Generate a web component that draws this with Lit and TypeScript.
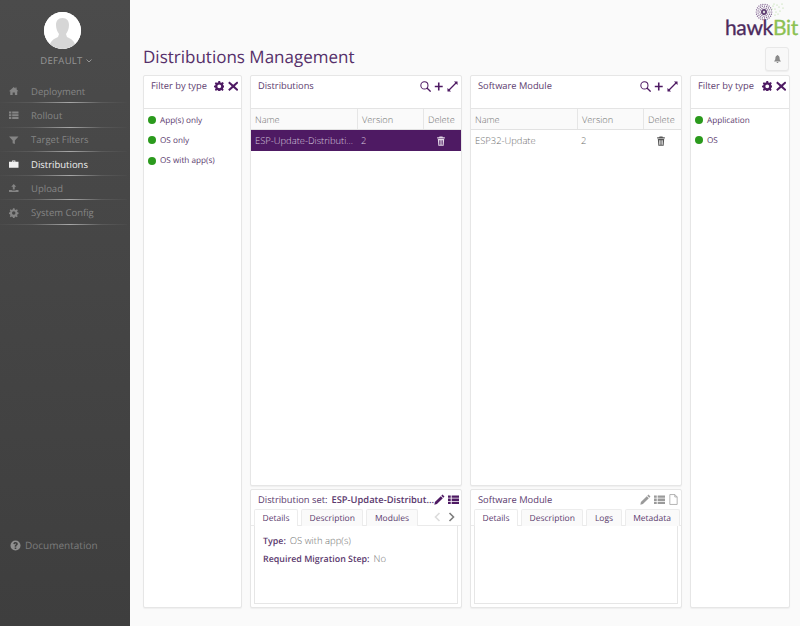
import { LitElement, html, css, svg } from "lit";
import { customElement } from "lit/decorators.js";

const I = {
  home: svg`<path d="M6 1 L8 2.8 V1.6 H9.6 V4.2 L12 6.4 H10.4 V11 H7.4 V7.8 H4.6 V11 H1.6 V6.4 H0 Z"/>`,
  list: svg`<path d="M0 1.5H3V4H0ZM4 1.5H12V4H4ZM0 5H3V7.5H0ZM4 5H12V7.5H4ZM0 8.5H3V11H0ZM4 8.5H12V11H4Z"/>`,
  filter: svg`<path d="M0 1.5H12L7.4 6.5V11L4.6 10V6.5Z"/>`,
  case: svg`<path d="M4 3V1.6H8V3H12V10.6H0V3ZM5 3H7V2.4H5Z"/>`,
  upload: svg`<path d="M6 1L9.2 4.4H7.2V8H4.8V4.4H2.8ZM0 8.4H3.6V9.2H8.4V8.4H12V11H0Z"/>`,
  gear: svg`<path fill-rule="evenodd" d="M5 0H7L7.3 1.6L8.6 2.1L10 1.2L11.2 2.6L10.2 3.9L10.7 5.1L12 5.4V7.2L10.7 7.5L10.2 8.7L11 10.1L9.7 11.3L8.5 10.4L7.3 10.9L7 12.2H5L4.7 10.9L3.5 10.4L2.2 11.3L1 10L1.8 8.7L1.3 7.5L0 7.2V5.4L1.3 5.1L1.8 3.9L0.9 2.6L2.1 1.3L3.4 2.1L4.7 1.6ZM6 3.9A2.2 2.2 0 1 0 6 8.3A2.2 2.2 0 1 0 6 3.9Z"/>`,
  close: svg`<path d="M1.6 0.6L6 4.4L10.4 0.6L11.8 2.2L7.8 6L11.8 9.8L10.4 11.4L6 7.6L1.6 11.4L0.2 9.8L4.2 6L0.2 2.2Z"/>`,
  plus: svg`<path d="M5 1H7V5H11V7H7V11H5V7H1V5H5Z"/>`,
  expand: svg`<path d="M11.5 .5V4.4L10 3L3 10L4.4 11.5H.5V7.6L2 9L9 2L7.6 .5Z"/>`,
  trash: svg`<path fill-rule="evenodd" d="M4.2 0.6H7.8L8.2 1.6H10.6V3H1.4V1.6H3.8ZM2.2 3.6H9.8L9.2 11.6H2.8ZM4 5V10.4H4.9V5ZM5.6 5V10.4H6.4V5ZM7.1 5V10.4H8V5Z"/>`,
  pencil: svg`<path d="M9.2 0.6L11.4 2.8L10.2 4L8 1.8ZM7.4 2.4L9.6 4.6L3.2 11L0.4 11.6L1 8.8Z"/>`,
  doc: svg`<path fill="none" stroke="currentColor" stroke-width=".8" d="M2 .6H7.4L10 3.2V11.4H2ZM7.4 .6V3.2H10"/>`,
  bell: svg`<path d="M6 0.6C6.6 .6 7 1 7 1.5C8.4 2 8.8 3.2 8.8 4.6C8.8 6.8 9.4 7.8 10.4 8.8V9.4H1.6V8.8C2.6 7.8 3.2 6.8 3.2 4.6C3.2 3.2 3.6 2 5 1.5C5 1 5.4 .6 6 .6ZM4.8 10H7.2C7.2 10.8 6.7 11.4 6 11.4C5.3 11.4 4.8 10.8 4.8 10Z"/>`,
  help: svg`<path fill-rule="evenodd" d="M6 .5A5.5 5.5 0 1 0 6 11.5A5.5 5.5 0 1 0 6 .5ZM5.1 8.2H6.9V9.8H5.1ZM3.6 4.4C3.7 3 4.7 2.3 6.1 2.3C7.5 2.3 8.5 3.1 8.5 4.3C8.5 5.2 8 5.6 7.4 6C7 6.3 6.9 6.5 6.9 7.4H5.1C5.1 6.2 5.3 5.7 6 5.2C6.5 4.9 6.7 4.7 6.7 4.4C6.7 4 6.4 3.8 6 3.8C5.6 3.8 5.3 4.1 5.3 4.6Z"/>`,
};
const icon = (p: unknown, cls = "") => html`<svg class="ico ${cls}" viewBox="0 0 12 12" fill="currentColor">${p}</svg>`;
const search = html`<svg class="ico" viewBox="0 0 12 12" fill="none" stroke="currentColor" stroke-width="1.1"><circle cx="4.8" cy="4.8" r="3.9"/><path d="M7.6 7.6L11.6 11.6" stroke-width="1.4"/></svg>`;

const dots = () => {
  const out = [];
  for (let r = 0; r < 3; r++) {
    const rad = 4.2 + r * 1.8;
    const n = 12 + r * 5;
    for (let i = 0; i < n; i++) {
      const a = (i / n) * Math.PI * 2;
      out.push(svg`<circle cx=${9 + Math.cos(a) * rad} cy=${9 + Math.sin(a) * rad} r="0.62" fill="#6d4a80" />`);
    }
  }
  for (const [x, y] of [[18, 3], [20, 6], [22, 2], [24, 4], [21, 9], [25, 8], [19, 1], [23, 11], [27, 1], [28, 5], [20, 12], [17, 6]]) {
    out.push(svg`<circle cx=${x} cy=${y} r="0.55" fill="#a9d18e" />`);
  }
  return out;
};

const nav = [
  ["Deployment", I.home], ["Rollout", I.list], ["Target Filters", I.filter],
  ["Distributions", I.case], ["Upload", I.upload], ["System Config", I.gear],
] as const;

@customElement("app-root")
export class AppRoot extends LitElement {
  static styles = css`
    :host { display: block; width: 800px; height: 626px; overflow: hidden; font-family: "Open Sans", sans-serif; font-size: 10px; color: #474747; text-rendering: geometricPrecision; }
    * { box-sizing: border-box; }
    .app { display: flex; height: 626px; background: #fafafa; }
    .ico { width: 12px; height: 12px; display: block; flex: none; }

    .side { width: 130px; flex: none; background: linear-gradient(#4b4b4b, #3e3e3e); display: flex; flex-direction: column; align-items: center; padding-top: 12px; }
    .avatar { width: 37px; height: 37px; border-radius: 50%; background: #fff; overflow: hidden; display: block; margin-right: 5px; }
    .user { margin: 5px 0 0 2px; color: #969696; font-size: 9.5px; letter-spacing: .3px; line-height: 14px; display: flex; align-items: center; gap: 3px; }
    .user svg { width: 6px; height: 4px; }
    .nav { width: 100%; margin-top: 11px; }
    .item { height: 24.3px; padding-left: 9px; display: flex; align-items: center; gap: 12.5px; color: #858585; font-size: 9.5px; position: relative; }
    .item .ico { width: 9.5px; height: 10px; }
    .item::after { content: ""; position: absolute; left: 0; right: 3px; bottom: 0; height: 1px; background: linear-gradient(90deg, #4a4a4a, #5a5a5a 25%, #a8a8a8 55%, #5a5a5a 80%, #4a4a4a); }
    .item.on { color: #f0f0f0; }
    .spacer { flex: 1; }
    .doc { width: 100%; padding: 0 0 74px 10px; display: flex; align-items: center; gap: 4px; color: #7c7c7c; font-size: 10px; }
    .doc .ico { width: 11px; height: 11px; color: #8f8f8f; }

    .main { flex: 1; min-width: 0; padding: 0 10px 18px 13px; display: flex; flex-direction: column; position: relative; }
    .head { height: 75px; flex: none; display: flex; justify-content: space-between; }
    h1 { margin: 44px 0 0; font-size: 17px; font-weight: 400; line-height: 26px; color: #552f69; }
    .head-r { display: flex; flex-direction: column; align-items: flex-end; margin-right: -10px; }
    .logo { height: 46px; width: 75px; position: relative; }
    .logo svg { position: absolute; left: 30px; top: 3px; width: 30px; height: 18px; }
    .logo span { position: absolute; right: 2px; top: 14px; font-size: 21px; line-height: 28px; font-family: "Lato", sans-serif; letter-spacing: -.3px; color: #4d2a5e; -webkit-text-stroke: .3px #4d2a5e; }
    .logo b { font-weight: 400; color: #8cc152; -webkit-text-stroke: .3px #8cc152; }
    .bell { width: 24px; height: 24px; margin-right: 11px; margin-top: 1px; border: 1px solid #e8e8e8; border-radius: 3px; background: #f8f8f8; display: flex; align-items: center; justify-content: center; color: #8a8a8a; box-shadow: 0 1px 1px #eee; }
    .bell .ico { width: 9px; height: 10px; }

    .cols { flex: 1; min-height: 0; display: grid; grid-template-columns: 99px 212px 212px 100px; column-gap: 8px; }
    .panel { background: #fff; border: 1px solid #e6e6e6; border-radius: 2px; box-shadow: 0 1px 1px #efefef; min-height: 0; min-width: 0; }
    .stack { display: flex; flex-direction: column; gap: 3px; min-height: 0; min-width: 0; }
    .stack .grow { flex: 1; }
    .stack .det { height: 119px; flex: none; padding: 1px 0 0; display: flex; flex-direction: column; }

    .phead { height: 33px; border-bottom: 1px solid #e4e4e4; padding: 3px 3px 0 7px; display: flex; align-items: flex-start; justify-content: space-between; color: #5b3a6e; font-size: 9.3px; line-height: 14px; }
    .tools { display: flex; gap: 3.5px; color: #4e1a63; align-items: center; height: 14px; }
    .tools .ico { width: 11px; height: 11px; }
    .tools .pl { width: 9.5px; height: 11px; }
    .filter .tools .ico { width: 10.5px; height: 10.5px; }
    .flist { padding-top: 1px; }
    .fitem { display: flex; align-items: center; gap: 4px; height: 20.3px; padding-left: 4px; color: #5b3a6e; font-size: 8.2px; }
    .dot { width: 8px; height: 8px; border-radius: 50%; background: #2b9a1d; flex: none; }

    .thead, .row { display: grid; grid-template-columns: 106px 66px 1fr; align-items: center; }
    .thead { height: 21px; border-bottom: 1px solid #e2e2e2; background: #fafafa; color: #6e6e6e; font-size: 9.2px; font-weight: 300; }
    .thead > div { height: 100%; padding-left: 4px; display: flex; align-items: center; border-left: 1px solid #e6e6e6; }
    .thead > div:first-child { border-left: 0; }
    .row { height: 21px; color: #6e6e6e; font-size: 9.4px; font-weight: 300; }
    .row > div { padding-left: 4px; white-space: nowrap; overflow: hidden; }
    .row.sel { background: #4e1a63; color: #d7c6dd; }
    .row .del { display: flex; justify-content: center; padding: 0 2px 0 0; }
    .row .del .ico { width: 10px; height: 10px; color: #555; }
    .row.sel .del .ico { color: #e4d9e8; }

    .dtitle { height: 18px; padding: 0 2px 1px 7px; display: flex; align-items: center; justify-content: space-between; color: #5b3a6e; font-size: 9.35px; white-space: nowrap; }
    .dtitle b { font-weight: 600; margin-left: 4px; }
    .dtitle .tools { gap: 3px; }
    .tools.grey { color: #9a9a9a; }
    .tabs { height: 17px; flex: none; padding-left: 3px; display: flex; gap: 3px; border-bottom: 1px solid #eaeaea; position: relative; }
    .tab { height: 17px; padding: 0 7.5px; display: flex; align-items: center; background: #fafafa; border: 1px solid #ececec; border-bottom: 0; border-radius: 2px 2px 0 0; color: #5b3a6e; font-size: 8.5px; white-space: nowrap; }
    .tab.on { background: #fff; height: 17px; margin-bottom: -1px; }
    .arrows { position: absolute; right: 6px; top: 3px; display: flex; gap: 7px; color: #7d7d7d; }
    .arrows svg { width: 7px; height: 10px; }
    .arrows svg:first-child { color: #dcdcdc; }
    .dbody { flex: 1; margin: 0 3px 3px; border: 1px solid #e6e6e6; border-top: 0; padding: 6px 8px; font-size: 9.5px; font-weight: 300; line-height: 18px; color: #6e6e6e; }
    .dbody b { font-weight: 600; font-size: 8.9px; color: #5b3a6e; margin-right: 4px; }
  `;

  private table(name: string, sel: boolean) {
    return html`<div class="thead"><div>Name</div><div>Version</div><div>Delete</div></div>
      <div class="row ${sel ? "sel" : ""}"><div>${name}</div><div>2</div><div class="del">${icon(I.trash)}</div></div>`;
  }

  private filter(items: string[]) {
    return html`<section class="panel filter">
      <div class="phead"><span>Filter by type</span><span class="tools">${icon(I.gear)}${icon(I.close)}</span></div>
      <div class="flist">${items.map((t) => html`<div class="fitem"><i class="dot"></i>${t}</div>`)}</div>
    </section>`;
  }

  render() {
    const arrow = (d: string) => html`<svg viewBox="0 0 7 10" fill="none" stroke="currentColor" stroke-width="1.6"><path d=${d} /></svg>`;
    return html`<div class="app">
      <aside class="side">
        <svg class="avatar" viewBox="0 0 37 37"><rect width="37" height="37" fill="#fff"/><path fill="#d6d6d6" d="M18.5 6C23 6 25 9 25 13C25 17 23.5 20 22 22L23 25C27 27 31 28 32 37H5C6 28 10 27 14 25L15 22C13.5 20 12 17 12 13C12 9 14 6 18.5 6Z"/></svg>
        <div class="user">DEFAULT <svg viewBox="0 0 6 4" fill="none" stroke="currentColor"><path d="M.5 .5L3 3L5.5 .5"/></svg></div>
        <nav class="nav">${nav.map(([t, p]) => html`<div class="item ${t === "Distributions" ? "on" : ""}">${icon(p)}<span>${t}</span></div>`)}</nav>
        <div class="spacer"></div>
        <div class="doc">${icon(I.help)}<span>Documentation</span></div>
      </aside>
      <main class="main">
        <div class="head">
          <h1>Distributions Management</h1>
          <div class="head-r">
            <div class="logo"><svg viewBox="0 0 30 18">${dots()}<circle cx="9" cy="9" r="3" fill="#5f3d73"/><circle cx="9" cy="9" r="1.2" fill="#ddd"/></svg><span>hawk<b>Bit</b></span></div>
            <div class="bell">${icon(I.bell)}</div>
          </div>
        </div>
        <div class="cols">
          ${this.filter(["App(s) only", "OS only", "OS with app(s)"])}
          <div class="stack">
            <section class="panel grow">
              <div class="phead"><span>Distributions</span><span class="tools">${search}${icon(I.plus, "pl")}${icon(I.expand)}</span></div>
              ${this.table("ESP-Update-Distributi...", true)}
            </section>
            <section class="panel det">
              <div class="dtitle"><span>Distribution set:<b>ESP-Update-Distribut...</b></span><span class="tools">${icon(I.pencil)}${icon(I.list)}</span></div>
              <div class="tabs"><div class="tab on">Details</div><div class="tab">Description</div><div class="tab">Modules</div>
                <div class="arrows">${arrow("M5.5 1L1.5 5L5.5 9")}${arrow("M1.5 1L5.5 5L1.5 9")}</div></div>
              <div class="dbody"><div><b>Type:</b>OS with app(s)</div><div><b>Required Migration Step:</b>No</div></div>
            </section>
          </div>
          <div class="stack">
            <section class="panel grow">
              <div class="phead"><span>Software Module</span><span class="tools">${search}${icon(I.plus, "pl")}${icon(I.expand)}</span></div>
              ${this.table("ESP32-Update", false)}
            </section>
            <section class="panel det">
              <div class="dtitle"><span>Software Module</span><span class="tools grey">${icon(I.pencil)}${icon(I.list)}${icon(I.doc)}</span></div>
              <div class="tabs"><div class="tab on">Details</div><div class="tab">Description</div><div class="tab">Logs</div><div class="tab">Metadata</div></div>
              <div class="dbody"></div>
            </section>
          </div>
          ${this.filter(["Application", "OS"])}
        </div>
      </main>
    </div>`;
  }
}
